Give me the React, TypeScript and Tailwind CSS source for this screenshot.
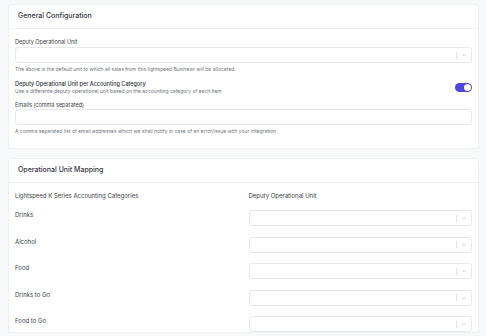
import React from 'react';

const Chevron: React.FC = () => (
  <svg width="6" height="6" viewBox="0 0 20 20" className="text-gray-400">
    <path d="M4.5 7.5 10 13l5.5-5.5" fill="none" stroke="currentColor" strokeWidth="1.6" />
  </svg>
);

const Select: React.FC = () => (
  <div className="h-[16px] w-full rounded-[3px] border border-[#e6e8eb] bg-white flex items-center justify-end">
    <div className="flex items-center h-full">
      <span className="w-px h-[7px] bg-[#dfe2e5]" />
      <span className="px-[4px] flex items-center">
        <Chevron />
      </span>
    </div>
  </div>
);

const Card: React.FC<{ title: string; children: React.ReactNode }> = ({ title, children }) => (
  <div className="bg-white rounded-[3px] border border-[#eff1f3]">
    <div className="h-[24px] pl-[9px] flex items-center border-b border-[#eff1f3]">
      <h2 className="text-[7px] font-medium text-[#33373d]">{title}</h2>
    </div>
    {children}
  </div>
);

const categories = ['Drinks', 'Alcohol', 'Food', 'Drinks to Go', 'Food to Go'];

export default function App() {
  return (
    <div
      className="w-[486px] h-[336px] overflow-hidden bg-[#f7f8f9] pt-[4px] pl-[8px] pr-[7px] text-[#3b3f45] antialiased"
      style={{ fontFamily: 'Inter, "Noto Sans", sans-serif' }}
    >
      <Card title="General Configuration">
        <div className="px-[6px] pt-[9px] pb-[13px]">
          <label className="block text-[5.5px] leading-[8px]">Deputy Operational Unit</label>
          <div className="mt-[1px]">
            <Select />
          </div>
          <p className="mt-[3px] text-[5px] leading-[7px] text-[#70767d]">
            The above is the default unit to which all sales from this lightspeed Business will be allocated.
          </p>

          <div className="mt-[7px] flex items-center justify-between">
            <div>
              <p className="text-[5.5px] font-medium leading-[8px] text-[#2f3338]">Deputy Operational Unit per Accounting Category</p>
              <p className="text-[5px] leading-[7px] text-[#70767d]">
                Use a differente deputy operational unit based on the accounting category of each item
              </p>
            </div>
            <div className="w-[17px] h-[9px] rounded-full bg-[#4f46e5] flex items-center justify-end pr-[1px]">
              <span className="w-[7px] h-[7px] rounded-full bg-white" />
            </div>
          </div>

          <label className="mt-[6px] block text-[5.5px] leading-[8px]">Emails (comma separated)</label>
          <div className="h-[16px] w-full rounded-[3px] border border-[#e6e8eb] bg-white" />
          <p className="mt-[3px] text-[5px] leading-[7px] text-[#70767d]">
            A comma separated list of email addresses which we shall notify in case of an error/issue with your integration
          </p>
        </div>
      </Card>

      <div className="mt-[9px]">
        <Card title="Operational Unit Mapping">
          <div className="px-[6px] pt-[9px]">
            <div className="grid grid-cols-2 gap-x-[10px] text-[6px] leading-[8px]">
              <p>Lightspeed K Series Accounting Categories</p>
              <p>Deputy Operational Unit</p>
            </div>
            <div className="mt-[10px] flex flex-col gap-[10.5px]">
              {categories.map((c) => (
                <div key={c} className="grid grid-cols-2 gap-x-[10px] items-start">
                  <p className="text-[6px] leading-[8px] pt-[1px]">{c}</p>
                  <Select />
                </div>
              ))}
            </div>
          </div>
        </Card>
      </div>
    </div>
  );
}
